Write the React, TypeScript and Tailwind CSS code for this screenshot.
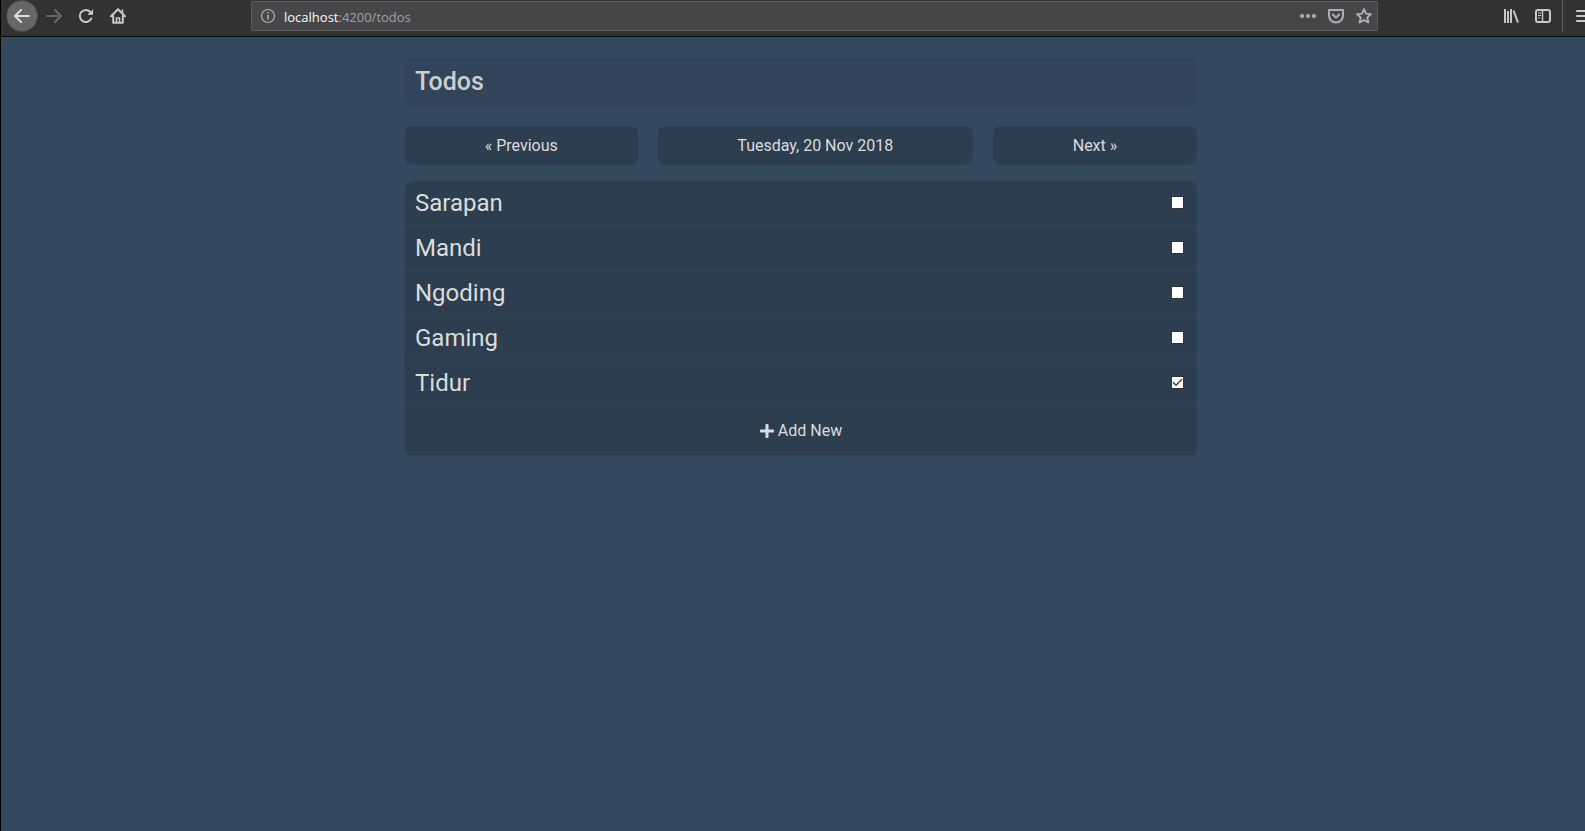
import { useState } from "react";
import type { ReactNode } from "react";
import { FaPlus } from "react-icons/fa";

const initialTodos = [
  { id: "sarapan", title: "Sarapan", done: false },
  { id: "mandi", title: "Mandi", done: false },
  { id: "ngoding", title: "Ngoding", done: false },
  { id: "gaming", title: "Gaming", done: false },
  { id: "tidur", title: "Tidur", done: true },
];

function Icon({ children }: { children: ReactNode }) {
  return (
    <svg
      viewBox="0 0 16 16"
      className="size-4 shrink-0"
      fill="none"
      stroke="currentColor"
      strokeWidth="2"
      strokeLinecap="round"
      strokeLinejoin="round"
      aria-hidden="true"
    >
      {children}
    </svg>
  );
}

function ToolButton({ label, children }: { label: string; children: ReactNode }) {
  return (
    <button type="button" aria-label={label} className="grid size-8 shrink-0 place-items-center">
      {children}
    </button>
  );
}

function BrowserBar() {
  return (
    <header className="flex h-[37px] items-start overflow-hidden border-b border-[#0c0c0d] bg-[#323234] pl-[5px] text-[#c8c8c8]">
      <div className="flex shrink-0">
        <button
          type="button"
          aria-label="Back"
          className="grid size-8 place-items-center rounded-full border border-[#4c4c4d] bg-[#676767] text-[#dcdcdc]"
        >
          <Icon>
            <path d="M15 8H1.5M7 2L1 8l6 6" />
          </Icon>
        </button>
        <button
          type="button"
          aria-label="Forward"
          disabled
          className="grid size-8 place-items-center text-[#69696b]"
        >
          <Icon>
            <path d="M1 8h13.500M9 2l6 6-6 6" />
          </Icon>
        </button>
        <ToolButton label="Reload">
          <Icon>
            <path d="M13.300 10.500A6 6 0 1 1 12.300 4" />
            <path d="M15 1.500v5.200H9.800z" fill="currentColor" stroke="none" />
            <path d="M14.500 2v4h-4" strokeWidth="1" />
          </Icon>
        </ToolButton>
        <ToolButton label="Home">
          <Icon>
            <path d="M1 8.200l7-7 7 7M3.200 8v6.800h9.600V8" />
            <path d="M6.500 14.500V10h3v4.500" strokeWidth="1.500" />
            <path d="M12.500 2v3" strokeWidth="1.500" />
          </Icon>
        </ToolButton>
      </div>

      <div className="mt-px ml-[117px] flex h-[30px] min-w-0 flex-1 items-center gap-2 rounded-xs border border-[#5c5c5e] bg-[#474749] pr-[5px] pl-2">
        <svg viewBox="0 0 16 16" className="size-4 shrink-0" fill="none" stroke="#b1b1b3" aria-hidden="true">
          <circle cx="8" cy="8" r="6.500" strokeWidth="1.200" />
          <path d="M8 7v4.500M8 4v1.600" strokeWidth="1.600" />
        </svg>
        <div className="min-w-0 flex-1 truncate pt-0.5 font-['Open_Sans','Noto_Sans',sans-serif] text-[13px] leading-5 text-[#a0a0a2]">
          <span className="text-[#f9f9fa]">localhost</span>:4200/todos
        </div>
        <div className="flex shrink-0 items-center gap-3 text-[#a9b1b8]">
          <button type="button" aria-label="Page actions">
            <Icon>
              <g fill="currentColor" stroke="none">
                <circle cx="2" cy="8" r="2" />
                <circle cx="8" cy="8" r="2" />
                <circle cx="14" cy="8" r="2" />
              </g>
            </Icon>
          </button>
          <button type="button" aria-label="Save to Pocket">
            <Icon>
              <path d="M1 2h14v5.500a7 7 0 0 1-14 0z" />
              <path d="M4.800 6.500L8 9.600l3.200-3.100" />
            </Icon>
          </button>
          <button type="button" aria-label="Bookmark this page">
            <Icon>
              <path d="M8 1.200l2 4.400 4.900.6-3.600 3.300 1 5L8 12.100l-4.300 2.400 1-5L1.100 6.200l4.900-.6z" strokeWidth="1.900" />
            </Icon>
          </button>
        </div>
      </div>

      <div className="ml-[117px] flex shrink-0">
        <ToolButton label="Library">
          <Icon>
            <path d="M2 1v14M5 3v12M8 1v14M10.500 2.500l4.500 12" strokeLinecap="butt" />
          </Icon>
        </ToolButton>
        <ToolButton label="Sidebars">
          <Icon>
            <rect x="1" y="2" width="14" height="12" rx="2" />
            <path d="M7.500 2v12" strokeWidth="1.500" />
            <path d="M3 5h3M3 7.500h3M3 10h2" strokeWidth="1" strokeLinecap="butt" />
          </Icon>
        </ToolButton>
        <div className="ml-[3px] h-8 w-px bg-[#5c5c5e]" />
        <button type="button" aria-label="Menu" className="flex h-8 w-[22px] items-center overflow-hidden pl-3">
          <Icon>
            <path d="M2 3h12M2 8h12M2 13h12" />
          </Icon>
        </button>
      </div>
    </header>
  );
}

export default function App() {
  const [todos, setTodos] = useState(initialTodos);

  const toggle = (id: string) =>
    setTodos(todos.map((todo) => (todo.id === id ? { ...todo, done: !todo.done } : todo)));

  const dayButton = "flex-auto rounded-lg bg-[#2d3e50] p-2 leading-[23px]";

  return (
    <div className="flex min-h-screen flex-col border-l border-black bg-[#33495d] font-[Roboto,sans-serif] text-base text-[#dcdcdc]">
      <BrowserBar />
      <main className="flex justify-center pt-5 pl-4">
        <div className="w-full max-w-[792px]">
          <h1 className="rounded-lg bg-[#324459] px-2.5 py-2 text-[25px] leading-[33px] font-medium text-[#cccfd0]">
            Todos
          </h1>
          <nav className="mt-5 flex gap-5">
            <button type="button" className={dayButton}>
              « Previous
            </button>
            <button type="button" className={dayButton}>
              Tuesday, 20 Nov 2018
            </button>
            <button type="button" className={dayButton}>
              Next »
            </button>
          </nav>
          <section className="mt-4 overflow-hidden rounded-lg bg-[#2d3e50] shadow-[0_2px_0_#314458]">
            <ul>
              {todos.map((todo) => (
                <li key={todo.id} className="border-b-2 border-[#314257]">
                  <label className="flex h-[43px] items-center justify-between pr-[13px] pl-2.5">
                    <span className="text-2xl">{todo.title}</span>
                    <span className="grid">
                      <input
                        type="checkbox"
                        checked={todo.done}
                        onChange={() => toggle(todo.id)}
                        className="peer col-start-1 row-start-1 size-[13px] appearance-none border border-[#333333] bg-white"
                      />
                      <svg
                        viewBox="0 0 13 13"
                        className="pointer-events-none invisible col-start-1 row-start-1 size-[13px] peer-checked:visible"
                        fill="none"
                        stroke="#444444"
                        strokeWidth="1.500"
                        aria-hidden="true"
                      >
                        <path d="M2 6.300l3 3L11 3.200" />
                      </svg>
                    </span>
                  </label>
                </li>
              ))}
            </ul>
            <button type="button" className="flex h-[49px] w-full items-center justify-center gap-1">
              <FaPlus className="h-4 w-3.5" aria-hidden="true" />
              Add New
            </button>
          </section>
        </div>
      </main>
    </div>
  );
}
